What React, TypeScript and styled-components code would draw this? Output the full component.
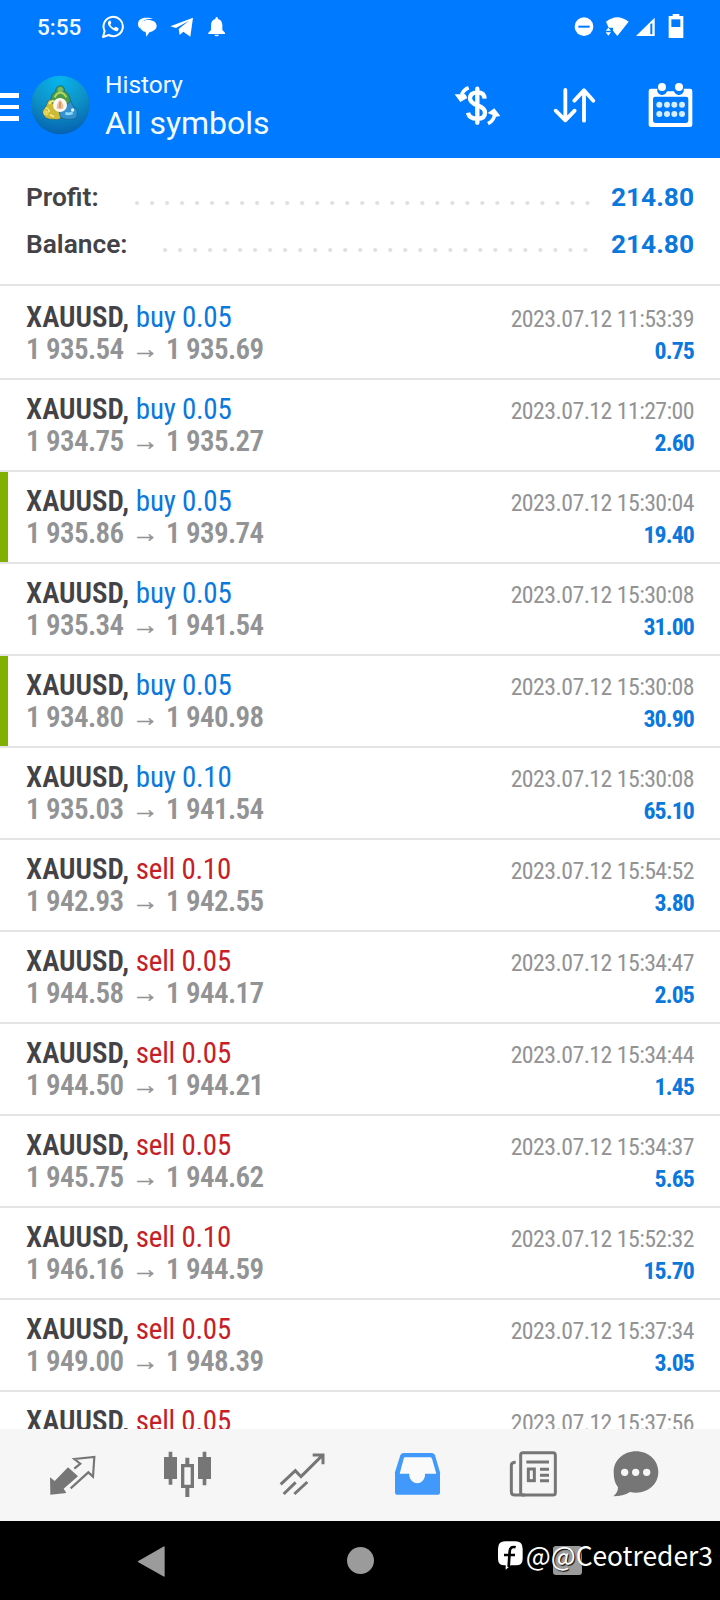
import React from 'react';
import styled, { createGlobalStyle, css } from 'styled-components';

const color = {
  brand: '#007aff',
  buy: '#0a78dc',
  sell: '#c62026',
  ink: '#434347',
  muted: '#929395',
  line: '#e4e4e4',
  mark: '#80b002',
  tab: '#767676',
  tabActive: '#4099fb',
  nav: '#9b9b9b',
};

const GlobalStyle = createGlobalStyle`
  *, *::before, *::after { box-sizing: border-box; }
  body {
    margin: 0;
    background: #fff;
    font-family: Roboto, 'Liberation Sans', sans-serif;
    -webkit-font-smoothing: antialiased;
  }
  svg { display: block; flex: none; }
`;

const Screen = styled.div`
  display: flex;
  flex-direction: column;
  width: 720px;
  height: 1600px;
  overflow: hidden;
  background: #fff;
`;

/* ---------- header ---------- */

const Header = styled.header`
  height: 158px;
  background: ${color.brand};
  color: #f2fbff;
`;

const StatusBar = styled.div`
  display: flex;
  justify-content: space-between;
  height: 52px;
  padding: 14px 36px 0 37px;
`;

const Notifications = styled.div`
  display: flex;
  height: 24px;
  gap: 12px;
  svg:last-child { margin-left: 2px; }
`;

const DeviceState = styled.div`
  display: flex;
  height: 24px;
  gap: 11px;
  svg:nth-child(3) { margin-left: -5px; }
  svg:last-child { margin-left: 1px; }
`;

const Clock = styled.span`
  width: 52px;
  font-size: 22.5px;
  font-weight: 500;
  line-height: 27px;
`;

const Toolbar = styled.div`
  display: flex;
  height: 106px;
`;

const MenuButton = styled.div`
  display: flex;
  flex-direction: column;
  gap: 7px;
  width: 19px;
  padding-top: 41px;
`;

const MenuBar = styled.span`
  height: 4.5px;
  background: #fff;
`;

const Avatar = styled.div`
  width: 60px;
  margin: 23px 0 0 11px;
`;

const Titles = styled.div`
  flex: 1;
  padding: 17px 0 0 15px;
`;

const Subtitle = styled.div`
  font-size: 24.5px;
  line-height: 32px;
`;

const Title = styled.h1`
  margin: 0;
  font-size: 32px;
  font-weight: 400;
  line-height: 44px;
`;

const Actions = styled.div`
  display: flex;
  gap: 48px;
  padding: 28px 26px 0 0;
`;

/* ---------- summary ---------- */

const Summary = styled.section`
  height: 128px;
  padding: 16px 26px 0 26px;
  border-bottom: 2px solid ${color.line};
`;

const SummaryRow = styled.div`
  display: flex;
  align-items: center;
  height: 47px;
  font-size: 26.3px;
  line-height: 47px;
`;

const SummaryLabel = styled.span`
  font-weight: 600;
  color: ${color.ink};
`;

const Leader = styled.span<{ $width: number; $inset: number }>`
  width: ${(p) => p.$width}px;
  height: 6px;
  margin: 10px ${(p) => p.$inset}px 0 auto;
  background: radial-gradient(circle at 3px 3px, #e0e0e0 1.5px, rgba(224, 224, 224, 0) 2.5px) 0 0 / 15.02px 6px repeat-x;
`;

const SummaryValue = styled.span`
  font-weight: 700;
  color: ${color.buy};
`;

/* ---------- deals ---------- */

const DealList = styled.ul`
  height: 1143px;
  margin: 0;
  padding: 2px 0 0;
  overflow: hidden;
  list-style: none;
  font-stretch: 75%;
`;

const DealRow = styled.li`
  display: flex;
  height: 92px;
  border-bottom: 2px solid ${color.line};
`;

const Marker = styled.span<{ $on: boolean }>`
  width: 7.5px;
  ${(p) => p.$on && css`background: ${color.mark};`}
`;

const DealMain = styled.div`
  flex: 1;
  padding: 13px 0 0 18.5px;
  font-size: 29px;
  line-height: 32px;
`;

const Symbol = styled.b`
  font-weight: 600;
  color: ${color.ink};
`;

const Side = styled.span<{ $side: string }>`
  letter-spacing: -0.25px;
  color: ${(p) => (p.$side === 'buy' ? color.buy : color.sell)};
`;

const Prices = styled.div`
  display: flex;
  font-size: 29px;
  font-weight: 600;
  letter-spacing: -0.62px;
  color: ${color.muted};
`;

const Arrow = styled.span`
  width: 42.5px;
  text-align: center;
  font-family: 'Liberation Sans', sans-serif;
  font-size: 27px;
  font-weight: 400;
  -webkit-text-stroke: 0.4px ${color.muted};
`;

const DealAside = styled.div`
  padding: 15px 26px 0 0;
  text-align: right;
  font-size: 23.8px;
  line-height: 32px;
  letter-spacing: -0.5px;
`;

const Stamp = styled.div`
  letter-spacing: -0.54px;
  color: ${color.muted};
`;

const Result = styled.div`
  font-weight: 700;
  letter-spacing: -0.9px;
  color: ${color.buy};
`;

/* ---------- bottom bars ---------- */

const TabBar = styled.nav`
  display: flex;
  height: 92px;
  padding: 21px 0 0 48px;
  gap: 65px;
  background: #f6f6f6;
  svg:last-child { margin-left: -12px; }
`;

const SystemBar = styled.footer`
  position: relative;
  display: flex;
  align-items: flex-start;
  height: 79px;
  padding: 24px 0 0 137px;
  background: #000;
`;

const HomeDot = styled.span`
  width: 27px;
  height: 27px;
  margin: 2px 0 0 182px;
  border-radius: 50%;
  background: ${color.nav};
`;

const RecentSquare = styled.span`
  width: 29px;
  height: 29px;
  margin: 1px 0 0 179px;
  border-radius: 3px;
  background: ${color.nav};
`;

const Watermark = styled.div`
  position: absolute;
  top: 15px;
  right: 7px;
  display: flex;
  align-items: center;
  gap: 3px;
  color: #fff;
  font-family: 'Noto Sans CJK SC', sans-serif;
  font-size: 26.4px;
  line-height: 38px;
  text-shadow: 1px 1px 1px #000;
`;

/* ---------- icons ---------- */

const WhatsappIcon = () => (
  <svg width="24" height="24" viewBox="302 42 72 72" fill="none" stroke="#fff">
    <path d="M308 111l5-18a29 29 0 1 1 12 12z" strokeWidth="6" strokeLinejoin="round" />
    <path d="M327 62c-6 3-6 11 2 20s19 14 24 10l2-7-9-5-5 4c-5-2-9-6-11-10l3-5-3-8z" fill="#fff" stroke="none" />
  </svg>
);

const ChatIcon = () => (
  <svg width="21" height="24" viewBox="412 42 63 72" fill="#fff">
    <path d="M415 72c0-12 9-19 25-19 9 0 15 1 19 4-23-1-37 6-37 24 0 3 0 4 1 6-5-3-8-9-8-15z" />
    <path d="M445 60c16 0 26 7 26 18 0 9-8 16-21 18l-10 14-2-14c-11-2-17-9-17-18 0-11 9-18 24-18z" />
  </svg>
);

const TelegramIcon = () => (
  <svg width="24" height="24" viewBox="511 42 72 72" fill="#fff">
    <path d="M580 53l-8 57-21-15-11 10-3-18 30-24-38 21-17-5z" />
  </svg>
);

const BellIcon = () => (
  <svg width="18" height="24" viewBox="626 42 54 72" fill="#fff">
    <path d="M652 51q4 0 4 6c8 2 13 9 13 18v15l8 8v4h-50v-4l8-8V75c0-9 5-16 13-18q0-6 4-6zM645 104h14q-1 5-7 5t-7-5z" />
  </svg>
);

const DoNotDisturbIcon = () => (
  <svg width="20" height="24" viewBox="639 42 60 72">
    <circle cx="669" cy="80" r="28" fill="#fff" />
    <path d="M652 80h34" stroke={color.brand} strokeWidth="6" />
  </svg>
);

const WifiIcon = () => (
  <svg width="24" height="24" viewBox="733 42 72 72" fill="#fff">
    <path d="M736 65q34-27 68 0l-34 43-13-16v-9h-13z" />
    <path d="M735 92l8-9 8 9zM735 97h16l-8 10z" />
  </svg>
);

const SignalIcon = () => (
  <svg width="21" height="24" viewBox="826 42 63 72">
    <path d="M829 108l56-55v55z" fill="#fff" />
    <path d="M872 72v31h6V70z" fill={color.brand} />
  </svg>
);

const BatteryIcon = () => (
  <svg width="16" height="24" viewBox="923 42 48 72">
    <path d="M937 42h20v6h12v67h-44V48h12z" fill="#fff" />
    <path d="M933 58h27v23h-27z" fill={color.brand} />
  </svg>
);

const AvatarIcon = () => (
  <svg width="60" height="60" viewBox="90 225 180 180">
    <defs>
      <radialGradient id="sky" cx="48%" cy="8%" r="95%">
        <stop offset="0" stopColor="#06b5ee" />
        <stop offset=".5" stopColor="#0e93c8" />
        <stop offset="1" stopColor="#055fae" />
      </radialGradient>
    </defs>
    <circle cx="181" cy="315" r="88" fill="url(#sky)" />
    <g stroke="#125f83" strokeWidth="2">
      <path d="M128 338q-2-12 8-15l8-20q6-9 18-4l20 28 2 28q-12 7-24 3-26 2-32-20z" fill="#cdbb38" />
      <path d="M232 340q2-12-10-17l-10-20q-10-6-20 4l-16 24 6 22q20 8 36 4 14 1 14-17z" fill="#3491cf" />
      <path d="M153 304q-2-22 14-30 0-16 14-17 14 1 13 17 16 6 17 30l-12 12h-36z" fill="#4b9b48" />
    </g>
    <circle cx="181" cy="269" r="8" fill="#79bd62" />
    <path d="M164 292q6-14 17-14t18 14" stroke="#b0d667" strokeWidth="6" fill="none" />
    <path d="M147 312q8-12 15-8" stroke="#f5eb77" strokeWidth="6" fill="none" />
    <circle cx="138" cy="338" r="8" fill="#e7d45a" />
    <path d="M150 344l12 6M136 324q10 2 12 12" stroke="#f4ed88" strokeWidth="5" />
    <path d="M196 340q13 4 22-2" stroke="#8bdcff" strokeWidth="8" fill="none" />
    <circle cx="218" cy="330" r="5" fill="#dff8ff" />
    <circle cx="180" cy="315" r="21" fill="#fcf8f2" />
    <path d="M180 299q13 13 10 26-9 6-20 0-1-13 10-26z" fill="#eac09c" />
    <path d="M180 306v18" stroke="#d19161" strokeWidth="5" />
  </svg>
);

const CurrencyIcon = () => (
  <svg width="48" height="48" viewBox="282 240 144 144" fill="none" stroke="#fff">
    <path d="M352 266v102" strokeWidth="13" strokeLinecap="round" />
    <path d="M374 296q-1-19-22-19-22 1-22 18 0 13 22 21 23 8 23 22 0 18-23 18-24 0-28-18" strokeWidth="13" />
    <path d="M326 263q-16 6-21 21" strokeWidth="11" />
    <path d="M284 283l17 23 21-12-6-11z" fill="#fff" stroke="none" />
    <path d="M384 371q17-9 20-26" strokeWidth="11" />
    <path d="M383 339l20-14 18 23-12 2z" fill="#fff" stroke="none" />
  </svg>
);

const SortIcon = () => (
  <svg width="48" height="48" viewBox="570 240 144 144" fill="none" stroke="#fff" strokeWidth="11.5" strokeLinecap="round" strokeLinejoin="round">
    <path d="M616 270v91M587 332l29 29 28-29" />
    <path d="M672 362v-90M643 302l29-31 28 31" />
  </svg>
);

const CalendarIcon = () => (
  <svg width="48" height="48" viewBox="858 240 144 144">
    <path fillRule="evenodd" fill="#fff" d="M873 266h19a15 15 0 0 0 29 8h21a15 15 0 0 0 29-8h19q7 0 7 7v101q0 7-7 7H873q-7 0-7-7V273q0-7 7-7zM886 290q-7 0-7 7v63q0 9 8 9h90q8 0 8-9v-63q0-7-7-7z" />
    <circle cx="906" cy="261" r="12" fill="#fff" />
    <circle cx="957" cy="261" r="12" fill="#fff" />
    <g fill="#d5edff">
      {[314, 342].map((y) => [898, 921, 943, 966].map((x) => <circle key={`${x}-${y}`} cx={x} cy={y} r="9" />))}
    </g>
  </svg>
);

const QuotesIcon = () => (
  <svg width="50" height="48" viewBox="144 150 150 144" fill="none" stroke={color.tab} strokeWidth="6.5">
    <path d="M150 232l14 11 40-41 30 27-43 37 8 13-48 5z" fill={color.tab} stroke="none" />
    <path d="M223 206l18-15-18-14 60-6-4 59-14-13-53 48" />
  </svg>
);

const CandlesIcon = () => (
  <svg width="50" height="48" viewBox="489 150 150 144" fill={color.tab}>
    <path d="M492 171h14v-16h11v16h14v66h-14v17h-11v-17h-14zM594 171h14v-16h11v16h14v66h-14v19h-11v-19h-14z" />
    <path fillRule="evenodd" d="M543 192h13v-19h12v19h14v72h-14v27h-12v-27h-13zM553 202v52h19v-52z" />
  </svg>
);

const TradeIcon = () => (
  <svg width="50" height="48" viewBox="834 150 150 144" fill="none" stroke={color.tab} strokeWidth="9">
    <path d="M842 253l44-41 17 18 64-64M938 165h31v28M851 282l36-35M883 282l39-36" />
  </svg>
);

const HistoryIcon = () => (
  <svg width="50" height="48" viewBox="99 150 150 144">
    <path d="M131 159h84q7 0 10 7l15 51v61q0 6-6 6H111q-6 0-6-6v-61l16-51q3-7 10-7z" fill={color.tabActive} />
    <path d="M135 172h76q3 0 5 4l13 45h-34v8q-5 20-23 21-19-1-24-21v-8h-29l12-45q1-4 4-4z" fill="#fafafa" />
  </svg>
);

const NewsIcon = () => (
  <svg width="50" height="48" viewBox="444 150 150 144" fill="none" stroke={color.tab} strokeWidth="9">
    <rect x="482" y="158" width="104" height="127" rx="7" />
    <path d="M467 187q-13 0-13 9v79q0 10 11 10h30" />
    <path d="M499 186h68M540 208h27M540 226h27M540 242h27" />
    <rect x="505" y="207" width="18" height="35" />
  </svg>
);

const ChatTabIcon = () => (
  <svg width="50" height="48" viewBox="754 150 150 144">
    <path d="M829 154c38 0 67 27 67 62s-29 62-67 62q-10 0-18-2-21 13-50 13 14-11 14-27-13-15-13-46c0-35 29-62 67-62z" fill={color.tab} />
    {[795, 828, 861].map((x) => <circle key={x} cx={x} cy="217" r="11" fill="#f6f6f6" />)}
  </svg>
);

const BackIcon = () => (
  <svg width="28" height="32" viewBox="411 432 84 96">
    <path d="M416 482l76-44v87z" fill={color.nav} stroke={color.nav} strokeWidth="4" strokeLinejoin="round" />
  </svg>
);

const FacebookIcon = () => (
  <svg width="25" height="29" viewBox="413 431 75 87">
    <path d="M435 432h30q22 0 22 22v30q0 20-20 20l-16 0-15 13v-13h-3q-20 0-20-20v-30q0-22 22-22z" fill="#fff" />
    <path d="M466 450q-17-5-18 13l-3 46M431 473h33" fill="none" stroke="#000" strokeWidth="8" />
  </svg>
);

/* ---------- data ---------- */

type Deal = {
  side: 'buy' | 'sell';
  volume: string;
  open: string;
  close: string;
  time: string;
  profit: string;
  marked?: boolean;
};

const deals: Deal[] = [
  { side: 'buy', volume: '0.05', open: '1 935.54', close: '1 935.69', time: '11:53:39', profit: '0.75' },
  { side: 'buy', volume: '0.05', open: '1 934.75', close: '1 935.27', time: '11:27:00', profit: '2.60' },
  { side: 'buy', volume: '0.05', open: '1 935.86', close: '1 939.74', time: '15:30:04', profit: '19.40', marked: true },
  { side: 'buy', volume: '0.05', open: '1 935.34', close: '1 941.54', time: '15:30:08', profit: '31.00' },
  { side: 'buy', volume: '0.05', open: '1 934.80', close: '1 940.98', time: '15:30:08', profit: '30.90', marked: true },
  { side: 'buy', volume: '0.10', open: '1 935.03', close: '1 941.54', time: '15:30:08', profit: '65.10' },
  { side: 'sell', volume: '0.10', open: '1 942.93', close: '1 942.55', time: '15:54:52', profit: '3.80' },
  { side: 'sell', volume: '0.05', open: '1 944.58', close: '1 944.17', time: '15:34:47', profit: '2.05' },
  { side: 'sell', volume: '0.05', open: '1 944.50', close: '1 944.21', time: '15:34:44', profit: '1.45' },
  { side: 'sell', volume: '0.05', open: '1 945.75', close: '1 944.62', time: '15:34:37', profit: '5.65' },
  { side: 'sell', volume: '0.10', open: '1 946.16', close: '1 944.59', time: '15:52:32', profit: '15.70' },
  { side: 'sell', volume: '0.05', open: '1 949.00', close: '1 948.39', time: '15:37:34', profit: '3.05' },
];

const DealItem = ({ deal }: { deal: Deal }) => (
  <DealRow>
    <Marker $on={!!deal.marked} />
    <DealMain>
      <Symbol>XAUUSD,</Symbol> <Side $side={deal.side}>{deal.side} {deal.volume}</Side>
      <Prices>
        <span>{deal.open}</span>
        <Arrow>→</Arrow>
        <span>{deal.close}</span>
      </Prices>
    </DealMain>
    <DealAside>
      <Stamp>2023.07.12 {deal.time}</Stamp>
      <Result>{deal.profit}</Result>
    </DealAside>
  </DealRow>
);

export default function App() {
  return (
    <Screen>
      <GlobalStyle />
      <Header>
        <StatusBar>
          <Notifications>
            <Clock>5:55</Clock>
            <WhatsappIcon />
            <ChatIcon />
            <TelegramIcon />
            <BellIcon />
          </Notifications>
          <DeviceState>
            <DoNotDisturbIcon />
            <WifiIcon />
            <SignalIcon />
            <BatteryIcon />
          </DeviceState>
        </StatusBar>
        <Toolbar>
          <MenuButton><MenuBar /><MenuBar /><MenuBar /></MenuButton>
          <Avatar><AvatarIcon /></Avatar>
          <Titles>
            <Subtitle>History</Subtitle>
            <Title>All symbols</Title>
          </Titles>
          <Actions>
            <CurrencyIcon />
            <SortIcon />
            <CalendarIcon />
          </Actions>
        </Toolbar>
      </Header>
      <Summary>
        <SummaryRow>
          <SummaryLabel>Profit:</SummaryLabel>
          <Leader $width={457} $inset={20} />
          <SummaryValue>214.80</SummaryValue>
        </SummaryRow>
        <SummaryRow>
          <SummaryLabel>Balance:</SummaryLabel>
          <Leader $width={427} $inset={22} />
          <SummaryValue>214.80</SummaryValue>
        </SummaryRow>
      </Summary>
      <DealList>
        {deals.map((deal, i) => <DealItem key={i} deal={deal} />)}
        <DealRow>
          <Marker $on={false} />
          <DealMain><Symbol>XAUUSD,</Symbol> <Side $side="sell">sell 0.05</Side></DealMain>
          <DealAside><Stamp>2023.07.12 15:37:56</Stamp></DealAside>
        </DealRow>
      </DealList>
      <TabBar>
        <QuotesIcon />
        <CandlesIcon />
        <TradeIcon />
        <HistoryIcon />
        <NewsIcon />
        <ChatTabIcon />
      </TabBar>
      <SystemBar>
        <BackIcon />
        <HomeDot />
        <RecentSquare />
        <Watermark>
          <FacebookIcon />
          <span>@@Ceotreder3</span>
        </Watermark>
      </SystemBar>
    </Screen>
  );
}
